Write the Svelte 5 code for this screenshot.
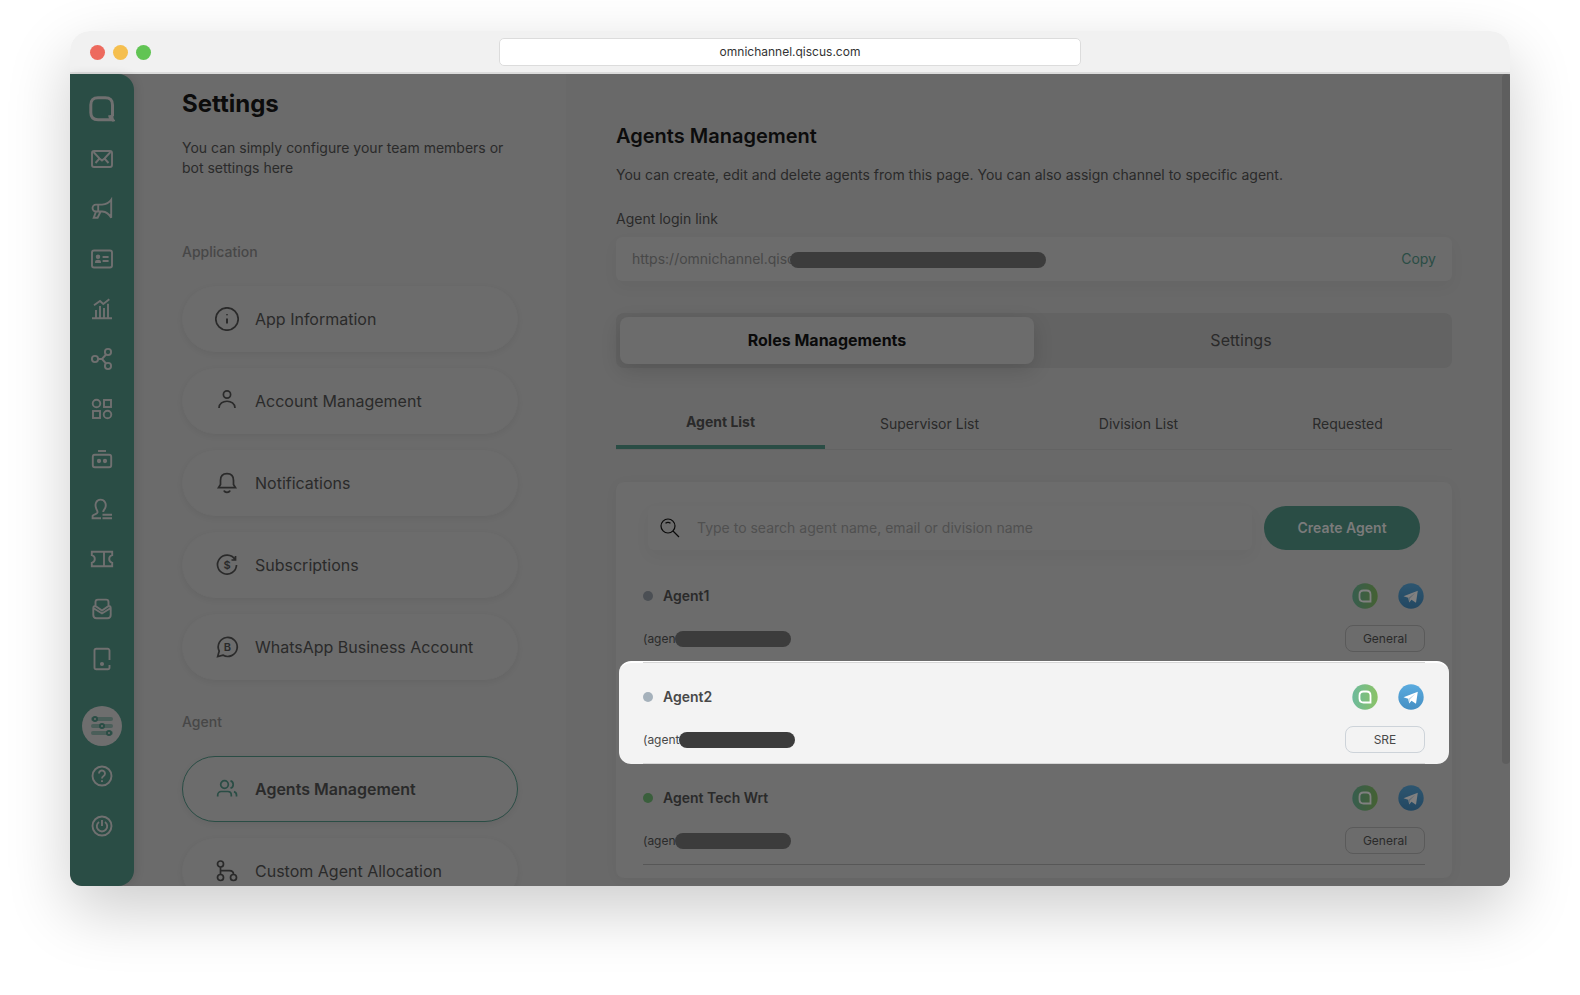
<script lang="ts">
    const navIcons = [
        { name: 'Inbox', art: '<rect x="2" y="4" width="20" height="16" rx="2"/><path d="M3.5 5l6 6.5 2.5 2 2.5-2 6-6.5M5.5 16l4-4.5M18.500 16l-4-4.5"/>' },
        { name: 'Broadcast', art: '<path d="M21.2 2.8v18c-2-3.8-5-6-9-6.3H6a3.4 3.4 0 0 1 0-6.9h6c4-.3 7-1.5 9.2-4.8zM8.2 7.6v6.9M6 14.5l-2.3 6.2h3.9l3-6.2"/>' },
        { name: 'Contacts', art: '<rect x="2" y="3.5" width="20" height="17" rx="2"/><circle cx="8" cy="9.7" r="1.3" fill="currentColor"/><path d="M6 15c0-1.6 4-1.6 4 0z" fill="currentColor"/><path d="M12.6 10h6M12.6 14h6"/>' },
        { name: 'Analytics', art: '<path d="M2 21.3h20M6 21v-8M10 21V9M14 21V11M18 21V6.7M4 8.3L10 4l3.3 3 6-4.7"/>' },
        { name: 'Integration', art: '<circle cx="5" cy="12" r="3.1"/><circle cx="18" cy="5" r="3.1"/><circle cx="18" cy="19" r="3.1"/><path d="M8.1 12H12l4-4.5M12 12l4 4.5"/>' },
        { name: 'App Center', art: '<circle cx="6.5" cy="6.5" r="3.8"/><rect x="14" y="3" width="7" height="7"/><rect x="3" y="14" width="7" height="7"/><circle cx="17.5" cy="17.5" r="3.8"/>' },
        { name: 'Bot', art: '<path d="M8 4h8"/><rect x="2.8" y="7.8" width="18.4" height="12.4" rx="2"/><circle cx="9" cy="14" r="1.2" fill="currentColor"/><circle cx="15" cy="14" r="1.2" fill="currentColor"/>' },
        { name: 'Agents', art: '<path d="M11 21.3H2.6v-2.5c1.3-1.6 4-1.4 4.8-3.1.4-1-.2-2.2-1-3.7-2-4.2-.4-9.4 4-9.4s6.5 4.6 4.7 8.6c-.6 1.4-2 2.2-1.9 3.8M12.5 17.7H22M12.5 21.3H22"/>' },
        { name: 'Tickets', art: '<path d="M1.8 4.7h20.4v3.5c-4 1-4 6.600 0 7.600v3.5H1.800v-3.5c4-1 4-6.600 0-7.600zM14 5v14"/>' },
        { name: 'Mail', art: '<path d="M5.5 9V5c0-1.5.9-2.4 2.4-2.4h8.2c1.5 0 2.4.9 2.4 2.4v4L12 13.5zM5.5 9c-1.5 0-2.2.7-2.2 2v7c0 2 1.2 3.2 3.2 3.2h11c2 0 3.2-1.2 3.2-3.2v-7c0-1.3-.7-2-2.2-2M4 11.5l8 5 8-5"/>' },
        { name: 'Device', art: '<path d="M19.5 13V3.6c0-1-.7-1.8-1.8-1.8H6.3c-1 0-1.8.7-1.8 1.8v16.8c0 1 .7 1.8 1.8 1.8h11.4c1 0 1.8-.7 1.8-1.8V18"/><circle cx="12" cy="17" r="1.1" fill="currentColor"/>' }
    ];

    const footIcons = [
        { name: 'Help', art: '<circle cx="12" cy="12" r="9.5"/><path d="M9 9.5a3 3 0 1 1 4.6 2.5c-1.1.7-1.6 1.2-1.6 2.5M12 16.3v1.6"/>' },
        { name: 'Log out', art: '<circle cx="12" cy="12" r="9.5"/><path d="M9 8a5.2 5.2 0 1 0 6 0M12 6v6"/>' }
    ];

    const applicationMenu = [
        { label: 'App Information', art: '<circle cx="12" cy="12" r="11.2"/><path d="M12 11.5v5M12 7.3v1" stroke-width="2"/>' },
        { label: 'Account Management', art: '<circle cx="12" cy="5.5" r="3.6"/><path d="M4 19c0-9 16-9 16 0"/>' },
        { label: 'Notifications', art: '<path d="M5.5 13.5v-4C5.5 5 8 2.700 12 2.700s6.5 2.300 6.5 6.800v4l2 3.200h-17zM9 19.5c.6 2.4 5.4 2.4 6 0"/>' },
        { label: 'Subscriptions', art: '<path d="M20 6.5A9.5 9.5 0 1 0 21.5 12M20.5 3v4h-4"/><text x="12" y="16" font-size="11" font-weight="600" text-anchor="middle" fill="currentColor" stroke="none">$</text>' },
        { label: 'WhatsApp Business Account', art: '<path d="M2.7 21.5l1.5-5.4a9.500 9.500 0 1 1 3.7 4z"/><text x="12.5" y="16" font-size="11" font-weight="600" text-anchor="middle" fill="currentColor" stroke="none">B</text>' }
    ];

    const agentMenu = [
        { label: 'Agents Management', active: true, art: '<circle cx="9.5" cy="7.5" r="3.8"/><path d="M2.7 19.5V18c0-2 1.600-3.500 3.500-3.500h6.600c2 0 3.500 1.500 3.500 3.500v1.500M15.500 3.800c3.600.8 3.600 6.400 0 7.300M19 14.600c1.600.5 2.500 1.700 2.500 3.400v1.500"/>' },
        { label: 'Custom Agent Allocation', active: false, art: '<circle cx="5.5" cy="5" r="3"/><circle cx="5.5" cy="18.5" r="3"/><circle cx="18.5" cy="18.5" r="3"/><path d="M5.5 8v7.5M5.5 11.7h9c2.5 0 4 1.500 4 3.800"/>' }
    ];

    const tabs = ['Agent List', 'Supervisor List', 'Division List', 'Requested'];

    const agents = [
        { name: 'Agent1', email: '(agen', division: 'General', status: 'offline', lit: false, brightLine: true },
        { name: 'Agent2', email: '(agent', division: 'SRE', status: 'offline', lit: true, brightLine: true },
        { name: 'Agent Tech Wrt', email: '(agen', division: 'General', status: 'online', lit: false, brightLine: false }
    ];
</script>

{#snippet menuItem(item)}
    <button class="menu-item" class:active={item.active}>
        <svg viewBox="0 0 24 24" aria-hidden="true">{@html item.art}</svg>
        <span>{item.label}</span>
    </button>
{/snippet}

{#snippet navLink(item)}
    <a href="#{item.name}" aria-label={item.name}>
        <svg viewBox="0 0 24 24" aria-hidden="true">{@html item.art}</svg>
    </a>
{/snippet}

<div class="page">
    <div class="window">
        <header class="titlebar">
            <div class="lights">
                <span class="red"></span><span class="yellow"></span><span class="green"></span>
            </div>
            <div class="address">omnichannel.qiscus.com</div>
        </header>

        <div class="app">
            <nav class="rail">
                <a class="logo" href="#home" aria-label="Home">
                    <svg viewBox="0 0 26 26" aria-hidden="true">
                        <path d="M23.5 20V9c0-5-2.5-7.3-7.3-7.3H9C4.3 1.7 1.8 4.2 1.8 9v7.500c0 4.800 2.500 7.200 7.200 7.200h14.500l-2.500-3" stroke-width="3" />
                        <path d="M19 19.5l5.5-1V26l-4-2z" fill="currentColor" stroke="none" />
                    </svg>
                </a>
                {#each navIcons as item}{@render navLink(item)}{/each}
                <a class="current" href="#settings" aria-label="Settings">
                    <span>
                        <svg viewBox="0 0 24 24" aria-hidden="true">
                            <path class="bars" d="M3 5h18M3 12h18M3 19h18" />
                            <circle cx="5" cy="5" r="2" />
                            <circle cx="12" cy="12" r="2" />
                            <circle cx="19" cy="19" r="2" />
                        </svg>
                    </span>
                </a>
                {#each footIcons as item}{@render navLink(item)}{/each}
            </nav>

            <aside class="settings">
                <h1>Settings</h1>
                <p>You can simply configure your team members or bot settings here</p>
                <h2>Application</h2>
                <div class="menu">
                    {#each applicationMenu as item}{@render menuItem(item)}{/each}
                </div>
                <h2 class="second">Agent</h2>
                <div class="menu">
                    {#each agentMenu as item}{@render menuItem(item)}{/each}
                </div>
            </aside>

            <main>
                <h1>Agents Management</h1>
                <p>You can create, edit and delete agents from this page. You can also assign channel to specific agent.</p>
                <label for="login-link">Agent login link</label>
                <div class="link-field">
                    <input id="login-link" type="text" readonly value="https://omnichannel.qisc" />
                    <span class="redacted"></span>
                    <button>Copy</button>
                </div>

                <div class="switch">
                    <button class="on">Roles Managements</button>
                    <button>Settings</button>
                </div>

                <div class="tabs" role="tablist">
                    {#each tabs as tab, i}
                        <button role="tab" aria-selected={i === 0} class:selected={i === 0}>{tab}</button>
                    {/each}
                </div>

                <section class="card">
                    <div class="toolbar">
                        <div class="search">
                            <svg viewBox="0 0 20 20" aria-hidden="true">
                                <circle cx="8" cy="8" r="7" />
                                <path d="M13 13l6 6M5.5 5.3c1.5-1.2 3.5-1.2 5 0" />
                            </svg>
                            <input type="text" aria-label="Search agents" placeholder="Type to search agent name, email or division name" />
                        </div>
                        <button class="create">Create Agent</button>
                    </div>

                    {#each agents as agent}
                        <article class:lit={agent.lit} class:bright-line={agent.brightLine}>
                            <div class="line">
                                <span class="dot {agent.status}"></span>
                                <strong>{agent.name}</strong>
                                <div class="channels">
                                    <svg viewBox="0 0 26 26" role="img" aria-label="Qiscus">
                                        <defs>
                                            <linearGradient id="qiscus"><stop offset="0" stop-color="#6dba9c" /><stop offset="1" stop-color="#8ac265" /></linearGradient>
                                        </defs>
                                        <circle cx="13" cy="13" r="12.700" fill="url(#qiscus)" />
                                        <path d="M18.5 16.5v-5c0-2.500-1.200-4-4-4h-3c-2.800 0-4 1.500-4 4v3c0 2.800 1.200 4 4 4h7v-3" fill="none" stroke="#fff" stroke-width="1.8" />
                                    </svg>
                                    <svg viewBox="0 0 26 26" role="img" aria-label="Telegram">
                                        <defs>
                                            <linearGradient id="telegram" x2="0" y2="1"><stop offset="0" stop-color="#5aabdf" /><stop offset="1" stop-color="#458fc3" /></linearGradient>
                                        </defs>
                                        <circle cx="13" cy="13" r="12.700" fill="url(#telegram)" />
                                        <path d="M5.5 13.300L19.800 7.700l-1.800 12-4.500-3-2.300 2.800-1-4.800z" fill="#fff" />
                                        <path d="M10.400 14.700l7-5-5.400 5.800-.6 3.800z" fill="#c5d9e8" />
                                    </svg>
                                </div>
                            </div>
                            <div class="line detail">
                                <span class="email">{agent.email}</span>
                                <span class="redacted"></span>
                                <span class="division">{agent.division}</span>
                            </div>
                        </article>
                    {/each}
                </section>
                <div class="scroll-thumb"></div>
            </main>
        </div>
    </div>
</div>

<style>
    :global(body) {
        margin: 0;
        background: #fff;
    }

    .page {
        --surface: #6b6b6b;
        --green: #2a4d45;
        --text: #2a2a2a;
        box-sizing: border-box;
        height: 100vh;
        padding: 31px 70px 109px;
        overflow: hidden;
        font-family: Inter, "Noto Sans", sans-serif;
        font-size: 14px;
        line-height: 20px;
        color: var(--text);
    }

    .page :global(*) {
        box-sizing: border-box;
    }

    button,
    input {
        font: inherit;
        color: inherit;
        background: none;
        border: none;
        padding: 0;
        margin: 0;
    }

    button {
        cursor: pointer;
    }

    h1,
    h2,
    p {
        margin: 0;
    }

    svg {
        flex: none;
        fill: none;
        stroke: currentColor;
        stroke-width: 1.7;
    }

    .window {
        display: flex;
        flex-direction: column;
        height: 100%;
        border-radius: 20px 20px 12px 12px;
        overflow: hidden;
        box-shadow: 0 24px 64px rgba(0, 0, 0, 0.2);
    }

    .titlebar {
        flex: none;
        display: grid;
        grid-template-columns: 1fr 582px 1fr;
        align-items: center;
        height: 43px;
        padding: 0 20px;
        background: #f1f1f1;
        border-bottom: 2px solid #dcdcdc;
    }

    .lights {
        display: flex;
        gap: 8px;
        padding-top: 2px;
    }

    .lights span {
        width: 15px;
        height: 15px;
        border-radius: 50%;
    }

    .red {
        background: #ed6a5e;
    }

    .yellow {
        background: #f5bf4f;
    }

    .green {
        background: #61c454;
    }

    .address {
        height: 28px;
        border: 1px solid #dcdcdc;
        border-radius: 5px;
        background: #fff;
        font-size: 12px;
        line-height: 26px;
        text-align: center;
        color: #333;
    }

    .app {
        flex: 1;
        min-height: 0;
        display: flex;
        background: var(--surface);
    }

    .rail {
        position: relative;
        z-index: 1;
        flex: none;
        width: 64px;
        background: var(--green);
        border-radius: 0 16px 16px 12px;
        box-shadow: 2px 0 10px rgba(0, 0, 0, 0.1);
    }

    .rail a {
        display: flex;
        align-items: center;
        justify-content: center;
        height: 50px;
        color: #707070;
    }

    .rail svg {
        width: 24px;
        height: 24px;
        stroke-width: 1.9;
    }

    .rail .logo {
        height: 60px;
        padding-top: 10px;
    }

    .rail .logo svg {
        width: 26px;
        height: 26px;
    }

    .rail .current {
        margin-top: 17px;
        color: var(--green);
    }

    .current span {
        display: flex;
        align-items: center;
        justify-content: center;
        width: 40px;
        height: 40px;
        border-radius: 50%;
        background: #6e6e6e;
    }

    .current .bars {
        stroke: #4a5e59;
        stroke-width: 4;
        stroke-linecap: round;
    }

    .current circle {
        fill: var(--surface);
        stroke-width: 2;
    }

    .settings {
        flex: none;
        width: 432px;
        padding: 14px 48px 0;
        overflow: hidden;
    }

    .settings h1 {
        font-size: 24px;
        font-weight: 700;
        line-height: 32px;
        color: #0c0c0c;
    }

    .settings p {
        margin-top: 18px;
    }

    .settings h2 {
        margin-top: 64px;
        font-size: 14px;
        font-weight: 500;
        line-height: 20px;
        color: #474747;
    }

    .settings h2.second {
        margin-top: 32px;
    }

    .menu {
        display: flex;
        flex-direction: column;
        gap: 16px;
        margin-top: 24px;
    }

    .menu-item {
        display: flex;
        align-items: center;
        gap: 16px;
        height: 66px;
        padding: 0 32px;
        border: 1px solid #6c6c6c;
        border-radius: 33px;
        font-size: 16px;
        background: #6c6c6c;
        box-shadow: 0 2px 6px rgba(0, 0, 0, 0.06);
    }

    .menu-item svg {
        width: 24px;
        height: 24px;
    }

    .menu-item.active {
        border-color: var(--green);
        font-weight: 600;
    }

    .menu-item.active svg {
        color: var(--green);
    }

    main {
        position: relative;
        flex: 1;
        min-width: 0;
        padding: 48px 58px 8px 50px;
        overflow: hidden;
        background: #696969;
    }

    main h1 {
        font-size: 20px;
        font-weight: 600;
        line-height: 28px;
        color: #0c0c0c;
    }

    main p {
        margin-top: 15px;
    }

    main label {
        display: block;
        margin-top: 24px;
    }

    .redacted {
        width: 116px;
        height: 16px;
        border-radius: 8px;
        background: #3c3c3c;
    }

    .link-field {
        position: relative;
        display: flex;
        height: 44px;
        margin-top: 8px;
        padding: 0 16px;
        border-radius: 6px;
        background: #6c6c6c;
        box-shadow: 0 6px 16px rgba(0, 0, 0, 0.04);
    }

    .link-field input {
        flex: 1;
        color: #484848;
        outline: none;
    }

    .link-field .redacted {
        position: absolute;
        left: 174px;
        top: 15px;
        width: 256px;
    }

    .link-field button {
        color: var(--green);
    }

    .switch {
        display: flex;
        height: 55px;
        margin-top: 32px;
        padding: 4px;
        border-radius: 8px;
        background: #636363;
    }

    .switch button {
        flex: 1;
        padding-bottom: 2px;
        border-radius: 8px;
        font-size: 16px;
    }

    .switch .on {
        font-weight: 700;
        color: #0a0a0a;
        background: #6c6c6c;
        box-shadow: 0 6px 20px rgba(0, 0, 0, 0.14);
    }

    .tabs {
        display: flex;
        height: 50px;
        margin-top: 32px;
        border-bottom: 1px solid #636363;
    }

    .tabs button {
        flex: 1;
        padding-bottom: 2px;
    }

    .tabs .selected {
        border-bottom: 4px solid var(--green);
        font-weight: 700;
    }

    .card {
        isolation: isolate;
        margin-top: 32px;
        padding: 24px 27px 13px;
        border-radius: 8px;
        background: #6c6c6c;
        box-shadow: 0 2px 14px rgba(0, 0, 0, 0.04);
    }

    .toolbar {
        display: flex;
        gap: 12px;
        height: 44px;
        margin-bottom: 12px;
        padding: 0 5px;
    }

    .search {
        flex: 1;
        display: flex;
        align-items: center;
        gap: 17px;
        padding-left: 12px;
        border-radius: 6px;
        box-shadow: 0 6px 16px rgba(0, 0, 0, 0.04);
    }

    .search svg {
        width: 20px;
        height: 20px;
        stroke: #0a0a0a;
        stroke-width: 1.2;
    }

    .search input {
        flex: 1;
        outline: none;
    }

    .search input::placeholder {
        color: #505050;
        opacity: 1;
    }

    .create {
        width: 156px;
        border-radius: 22px;
        font-weight: 600;
        color: #7b7b7b;
        background: var(--green);
    }

    article {
        position: relative;
        padding: 21px 0 10px;
        border-bottom: 1px solid #575757;
    }

    article.bright-line {
        border-color: #d6d6d6;
    }

    article.lit {
        color: #484848;
    }

    article.lit::before {
        content: "";
        position: absolute;
        z-index: -1;
        inset: -2px -24px -1px;
        border-top: 2px solid #fff;
        border-radius: 12px;
        background: #f3f3f3;
    }

    .line {
        display: flex;
        align-items: center;
        height: 26px;
    }

    .detail {
        height: 27px;
        margin-top: 16px;
        font-size: 12px;
    }

    .detail .redacted {
        margin-left: -1px;
    }

    .dot {
        width: 10px;
        height: 10px;
        margin-right: 10px;
        border-radius: 50%;
    }

    .offline {
        background: #4b4f54;
    }

    .lit .offline {
        background: #a5b1bb;
    }

    .online {
        background: #3a5f3c;
    }

    .line strong {
        font-weight: 600;
    }

    .channels {
        display: flex;
        gap: 20px;
        margin-left: auto;
        padding-right: 1px;
        filter: brightness(0.5);
    }

    .lit .channels {
        filter: none;
    }

    .channels svg {
        width: 26px;
        height: 26px;
        stroke: none;
    }

    .division {
        width: 80px;
        height: 27px;
        margin-left: auto;
        border: 1px solid #5a5a5a;
        border-radius: 8px;
        line-height: 25px;
        text-align: center;
    }

    .lit .division {
        border-color: #cdd3d9;
    }

    .scroll-thumb {
        position: absolute;
        top: 0;
        right: 0;
        width: 8px;
        height: 85%;
        border-radius: 4px;
        background: #5e5e5e;
    }
</style>
